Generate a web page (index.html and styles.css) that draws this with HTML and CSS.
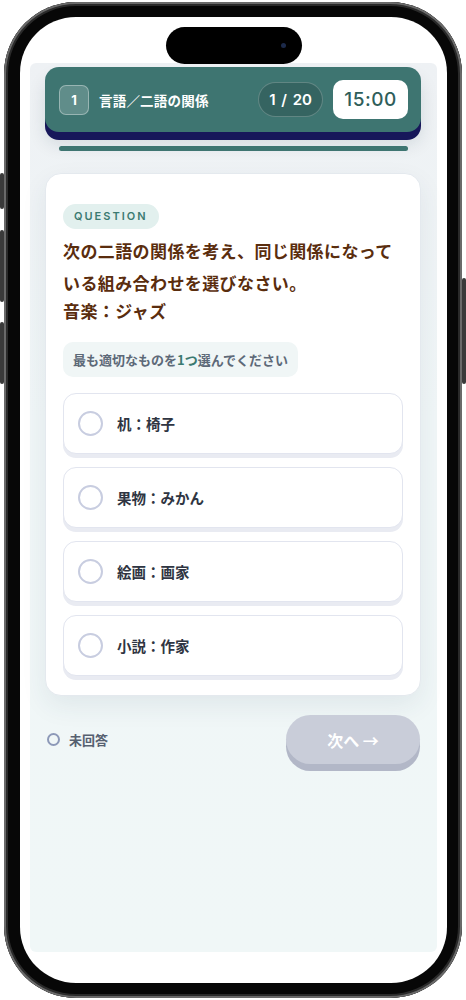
FILE: index.html
```html
<!DOCTYPE html>
<html lang="ja">
<head>
<meta charset="UTF-8">
<meta name="viewport" content="width=device-width, initial-scale=1.0">
<title>言語／二語の関係</title>
<link rel="stylesheet" href="styles.css">
</head>
<body>
<div class="phone">
  <span class="side side-action"></span>
  <span class="side side-up"></span>
  <span class="side side-down"></span>
  <span class="side side-power"></span>
  <div class="screen">
    <div class="island"><span class="cam"></span></div>
    <div class="app">
      <div class="header">
        <div class="num">1</div>
        <div class="title">言語／二語の関係</div>
        <div class="count">1 / 20</div>
        <div class="timer">15:00</div>
      </div>
      <div class="progress"><div class="progress-fill" style="width: 100%;"></div></div>

      <div class="card">
        <div class="chip">QUESTION</div>
        <p class="question">次の二語の関係を考え、同じ関係になっている組み合わせを選びなさい。</p>
        <p class="pair">音楽：ジャズ</p>
        <div class="hint">最も適切なものを<span class="hl">1つ</span>選んでください</div>
        <div class="options">
          <div class="option"><span class="radio"></span><span class="label">机：椅子</span></div>
          <div class="option"><span class="radio"></span><span class="label">果物：みかん</span></div>
          <div class="option"><span class="radio"></span><span class="label">絵画：画家</span></div>
          <div class="option"><span class="radio"></span><span class="label">小説：作家</span></div>
        </div>
      </div>

      <div class="footer">
        <div class="status"><span class="dot"></span>未回答</div>
        <button class="next" disabled>次へ →</button>
      </div>
    </div>
  </div>
</div>
</body>
</html>
```

FILE: styles.css
```css
body {
  margin: 0;
  background-color: #ffffff;
  font-family: "Noto Sans CJK JP", "Noto Sans", sans-serif;
}
.phone {
  position: relative;
  width: 458px;
  height: 996px;
  margin: 2px 0 0 4px;
  padding: 15px 15px 15px 16px;
  box-sizing: border-box;
  border-radius: 72px;
  background-color: #070707;
  box-shadow: inset 0 0 0 2px #6a6a6a, inset 0 0 0 4px #2a2a2a;
}
.side {
  position: absolute;
  width: 4px;
  background-color: #3a3a3a;
  border-radius: 2px;
}
.side-action { left: -4px; top: 171px; height: 36px; }
.side-up { left: -4px; top: 228px; height: 72px; }
.side-down { left: -4px; top: 320px; height: 62px; }
.side-power { right: -4px; top: 276px; height: 106px; }
.screen {
  position: relative;
  height: 100%;
  padding: 46px 10px 31px 10px;
  box-sizing: border-box;
  border-radius: 56px;
  background-color: #ffffff;
  overflow: hidden;
}
.island {
  position: absolute;
  top: 10px;
  left: 146px;
  width: 136px;
  height: 37px;
  border-radius: 19px;
  background-color: #000000;
}
.cam {
  position: absolute;
  top: 16px;
  right: 16px;
  width: 5px;
  height: 5px;
  border-radius: 50%;
  background-color: #1c2a4a;
}
.app {
  height: 100%;
  padding: 4px 16px 0 15px;
  box-sizing: border-box;
  border-radius: 6px;
  background: linear-gradient(#eef1f4, #f0f6f7 40%, #f0f7f7);
}

/* header */
.header {
  display: flex;
  align-items: center;
  height: 65px;
  padding: 0 13px 0 14px;
  border-radius: 14px;
  background-color: #3e7571;
  box-shadow: 0 8px 0 #17175a, 0 12px 18px rgba(20, 40, 60, 0.12);
  color: #ffffff;
}
.num {
  width: 28px;
  height: 28px;
  line-height: 28px;
  text-align: center;
  border: 1px solid rgba(255, 255, 255, 0.35);
  border-radius: 7px;
  background-color: rgba(255, 255, 255, 0.18);
  font-family: "Inter", sans-serif;
  font-size: 13px;
  font-weight: 700;
}
.title {
  flex: 1;
  margin-left: 10px;
  font-size: 13.5px;
  font-weight: 700;
  letter-spacing: 0.2px;
}
.count {
  height: 33px;
  line-height: 33px;
  padding: 0 10px;
  border: 1px solid rgba(255, 255, 255, 0.22);
  border-radius: 18px;
  background-color: rgba(0, 0, 0, 0.14);
  font-family: "Inter", sans-serif;
  font-size: 15px;
  font-weight: 600;
  word-spacing: 2px;
}
.timer {
  margin-left: 10px;
  width: 75px;
  height: 39px;
  line-height: 39px;
  text-align: center;
  border-radius: 10px;
  background-color: #ffffff;
  color: #2f5e5a;
  font-family: "Inter", sans-serif;
  font-size: 19px;
  font-weight: 500;
  letter-spacing: 0.5px;
}
.progress {
  height: 5px;
  margin: 14px 13px 0 14px;
  border-radius: 3px;
  background-color: #d9e4e4;
}
.progress-fill {
  height: 100%;
  border-radius: 3px;
  background-color: #3e7571;
}

/* card */
.card {
  margin-top: 22px;
  padding: 30px 17px 19px 17px;
  border: 1px solid #e4e9ee;
  border-radius: 16px;
  background-color: #ffffff;
  box-shadow: 0 10px 26px rgba(40, 70, 90, 0.08);
}
.chip {
  width: fit-content;
  height: 25px;
  line-height: 25px;
  padding: 0 11px;
  border-radius: 13px;
  background-color: #e2f0ee;
  color: #3b7a71;
  font-family: "Inter", sans-serif;
  font-size: 11px;
  font-weight: 600;
  letter-spacing: 2px;
}
.question {
  margin: 6px 0 0 0;
  line-height: 32px;
  font-size: 17px;
  font-weight: 700;
  letter-spacing: 0.4px;
  color: #5a2d0e;
}
.pair {
  margin: 0;
  line-height: 24px;
  font-size: 17px;
  font-weight: 700;
  letter-spacing: 0.4px;
  color: #5a2d0e;
}
.hint {
  width: fit-content;
  margin-top: 19px;
  height: 35px;
  line-height: 35px;
  padding: 0 10px;
  border-radius: 10px;
  background-color: #f0f6f6;
  color: #5d6978;
  font-size: 13px;
  font-weight: 700;
}
.hl {
  color: #3b7a71;
}
.options {
  display: flex;
  flex-direction: column;
  gap: 13px;
  margin-top: 16px;
}
.option {
  display: flex;
  align-items: center;
  height: 59px;
  padding-left: 14px;
  border: 1px solid #e2e5ef;
  border-radius: 13px;
  background-color: #ffffff;
  box-shadow: 0 4px 0 #e9ebf2;
}
.radio {
  width: 21px;
  height: 21px;
  border: 2.5px solid #c8cde0;
  border-radius: 50%;
}
.label {
  margin-left: 14px;
  font-size: 14.5px;
  font-weight: 700;
  color: #2f3542;
}

/* footer */
.footer {
  display: flex;
  align-items: center;
  justify-content: space-between;
  margin-top: 19px;
  padding-left: 2px;
}
.status {
  display: flex;
  align-items: center;
  font-size: 13px;
  font-weight: 700;
  color: #566070;
}
.dot {
  width: 9px;
  height: 9px;
  margin-right: 9px;
  border: 2.5px solid #8d99b8;
  border-radius: 50%;
}
.next {
  width: 134px;
  height: 49px;
  margin-right: 1px;
  border: none;
  border-radius: 25px;
  background-color: #c9cdd9;
  box-shadow: 0 7px 0 #b2b7c7;
  color: #ffffff;
  font-family: "Noto Sans CJK JP", sans-serif;
  font-size: 16px;
  font-weight: 700;
}
```
